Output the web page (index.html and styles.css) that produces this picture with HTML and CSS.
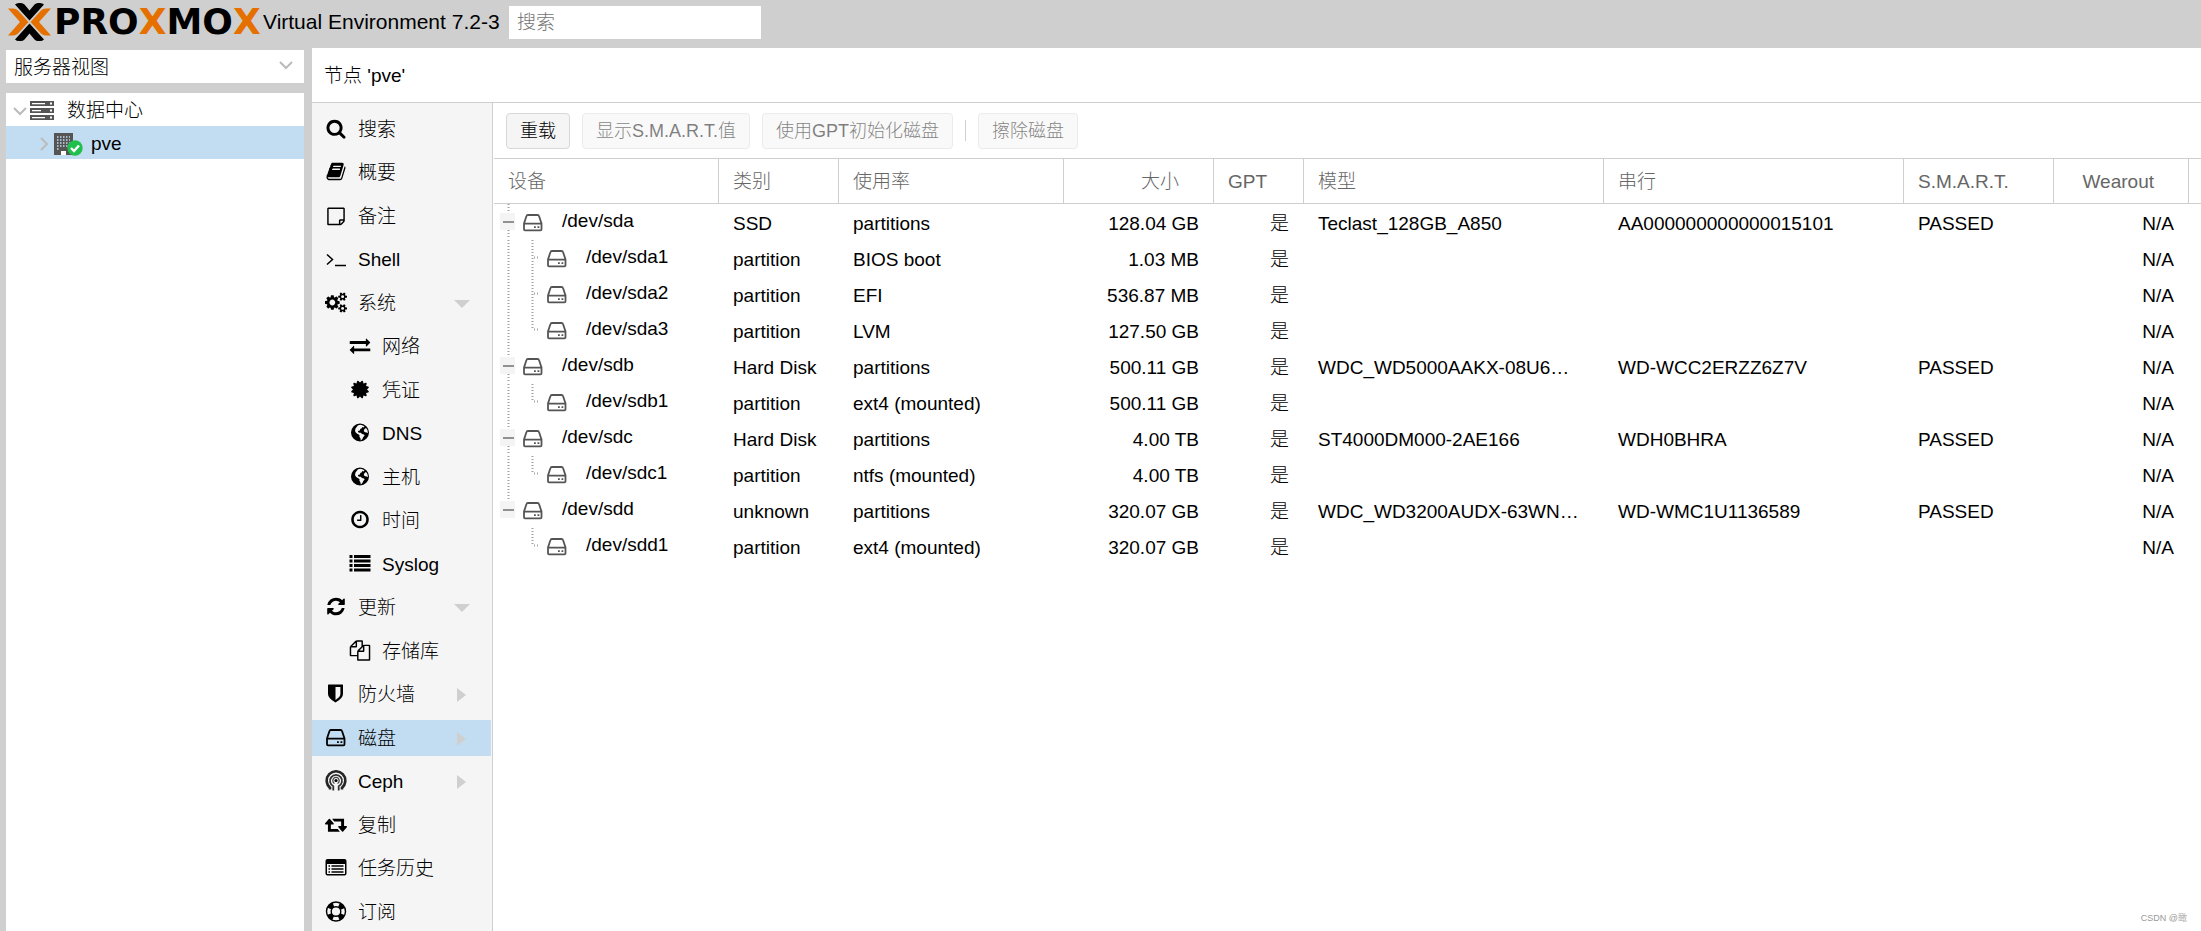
FILE: index.html
```
<!DOCTYPE html>
<html lang="zh-CN">
<head>
<meta charset="utf-8">
<title>pve - Proxmox Virtual Environment</title>
<link rel="stylesheet" href="styles.css">
</head>
<body>
<svg class="sprite" aria-hidden="true">
  <symbol id="i-search" viewBox="0 0 1920 1792"><path d="M1280 832q0-185-131.500-316.500t-316.500-131.500-316.500 131.500-131.500 316.500 131.500 316.500 316.500 131.500 316.500-131.500 131.500-316.500zm512 832q0 52-38 90t-90 38q-54 0-90-38l-343-342q-179 124-399 124-143 0-273.500-55.500t-225-150-150-225-55.500-273.500 55.500-273.500 150-225 225-150 273.500-55.500 273.500 55.500 225 150 150 225 55.500 273.500q0 220-124 399l343 343q37 37 37 90z"/></symbol>
  <symbol id="i-book" viewBox="-64 0 1920 1792"><path d="M1703 478q40 57 18 129l-275 906q-19 64-76.500 107.500t-122.500 43.500h-923q-77 0-148.500-53.500t-99.500-131.500q-24-67-2-127 0-4 3-27t4-37q1-8-3-21.500t-3-19.500q2-11 8-21t16.500-23.500 16.500-23.500q23-38 45-91.500t30-91.500q3-10 .5-30t-.5-28q3-11 17-28t17-23q21-36 42-92t25-90q1-9-2.500-32t.5-28q4-13 22-30.500t22-22.500q19-26 42.500-84.500t27.500-96.500q1-8-3-25.500t-2-26.500q2-8 9-18t18-23 17-21q8-12 16.500-30.500t15-35 16-36 19.500-32 26.500-23.500 36-11.500 47.500 5.500l-1 3q38-9 51-9h761q74 0 114 56t18 130l-274 906q-36 119-71.500 153.500t-128.500 34.500h-869q-27 0-38 15-11 16-1 43 24 70 144 70h923q29 0 56-15.500t35-41.500l300-987q7-22 5-57 38 15 59 43zm-1064 2q-4 13 2 22.500t20 9.500h608q13 0 25.500-9.500t16.500-22.500l21-64q4-13-2-22.500t-20-9.500h-608q-13 0-25.500 9.500t-16.500 22.500zm-83 256q-4 13 2 22.500t20 9.500h608q13 0 25.500-9.500t16.500-22.500l21-64q4-13-2-22.500t-20-9.500h-608q-13 0-25.500 9.500t-16.500 22.500z"/></symbol>
  <symbol id="i-note" viewBox="-192 -80 1920 1792"><path d="M1400 1280h-248v248q29-10 41-22l185-185q12-12 22-41zm-280-128h288v-896h-1280v1280h896v-288q0-40 28-68t68-28zm416-928v1024q0 40-20 88t-48 76l-184 184q-28 28-76 48t-88 20h-1024q-40 0-68-28t-28-68v-1344q0-40 28-68t68-28h1344q40 0 68 28t28 68z"/></symbol>
  <symbol id="i-shell" viewBox="0 0 22 21"><path d="M2 6.500l5.500 5-5.500 5M10 17.500h11" fill="none" stroke="currentColor" stroke-width="1.500"/></symbol>
  <symbol id="i-cogs" viewBox="0 0 1920 1792"><path d="M896 896q0-106-75-181t-181-75-181 75-75 181 75 181 181 75 181-75 75-181zm768 512q0-52-38-90t-90-38-90 38-38 90q0 53 37.500 90.500t90.500 37.500 90.500-37.500 37.500-90.500zm0-1024q0-52-38-90t-90-38-90 38-38 90q0 53 37.500 90.500t90.500 37.500 90.500-37.500 37.500-90.500zm-384 421v185q0 10-7 19.500t-16 10.500l-155 24q-11 35-32 76 34 48 90 115 7 11 7 20 0 12-7 19-23 30-82.500 89.500t-78.500 59.500q-11 0-21-7l-115-90q-37 19-77 31-11 108-23 155-7 24-30 24h-186q-11 0-20-7.500t-10-17.500l-23-153q-34-10-75-31l-118 89q-7 7-20 7-11 0-21-8-144-133-144-160 0-9 7-19 10-14 41-53t47-61q-23-44-35-82l-152-24q-10-1-17-9.500t-7-19.500v-185q0-10 7-19.500t16-10.500l155-24q11-35 32-76-34-48-90-115-7-11-7-20 0-12 7-20 22-30 82-89t79-59q11 0 21 7l115 90q34-18 77-32 11-108 23-154 7-24 30-24h186q11 0 20 7.500t10 17.500l23 153q34 10 75 31l118-89q8-7 20-7 11 0 21 8 144 133 144 160 0 9-7 19-11 15-41 53.500t-47 61.500q23 44 35 82l152 23q10 2 17 10.500t7 19.500zm640 533v140q0 16-149 31-12 27-30 52 51 113 51 138 0 4-4 7-122 71-124 71-8 0-46-47t-52-68q-20 2-30 2t-30-2q-14 21-52 68t-46 47q-2 0-124-71-4-3-4-7 0-25 51-138-18-25-30-52-149-15-149-31v-140q0-16 149-31 13-29 30-52-51-113-51-138 0-4 4-7 4-2 35-20t59-34 30-16q8 0 46 46.500t52 67.500q20-2 30-2t30 2q51-71 92-112l6-2q4 0 124 70 4 3 4 7 0 25-51 138 17 23 30 52 149 15 149 31zm0-1024v140q0 16-149 31-12 27-30 52 51 113 51 138 0 4-4 7-122 71-124 71-8 0-46-47t-52-68q-20 2-30 2t-30-2q-14 21-52 68t-46 47q-2 0-124-71-4-3-4-7 0-25 51-138-18-25-30-52-149-15-149-31v-140q0-16 149-31 13-29 30-52-51-113-51-138 0-4 4-7 4-2 35-20t59-34 30-16q8 0 46 46.500t52 67.500q20-2 30-2t30 2q51-71 92-112l6-2q4 0 124 70 4 3 4 7 0 25-51 138 17 23 30 52 149 15 149 31z"/></symbol>
  <symbol id="i-exchange" viewBox="-64 0 1920 1792"><path d="M1792 1184v192q0 13-9.500 22.500t-22.500 9.500h-1376v192q0 13-9.500 22.500t-22.500 9.500q-12 0-24-10l-319-320q-9-9-9-22 0-14 9-23l320-320q9-9 23-9 13 0 22.500 9.500t9.500 22.500v192h1376q13 0 22.500 9.500t9.500 22.500zm0-544q0 14-9 23l-320 320q-9 9-23 9-13 0-22.500-9.500t-9.500-22.500v-192h-1376q-13 0-22.500-9.500t-9.500-22.500v-192q0-13 9.500-22.500t22.500-9.500h1376v-192q0-14 9-23t23-9q12 0 24 10l319 319q9 9 9 23z"/></symbol>
  <symbol id="i-cert" viewBox="-64 0 1920 1792"><path d="M1504 896l138 135q30 28 20 70-12 41-52 51l-188 48 53 186q12 41-19 70-29 31-70 19l-186-53-48 188q-10 40-51 52-12 2-19 2-31 0-51-22l-135-138-135 138q-28 30-70 20-41-11-51-52l-48-188-186 53q-41 12-70-19-31-29-19-70l53-186-188-48q-40-10-52-51-10-42 20-70l138-135-138-135q-30-28-20-70 12-41 52-51l188-48-53-186q-12-41 19-70 29-31 70-19l186 53 48-188q10-41 51-51 41-12 70 19l135 139 135-139q29-30 70-19 41 10 51 51l48 188 186-53q41-12 70 19 31 29 19 70l-53 186 188 48q40 10 52 51 10 42-20 70z"/></symbol>
  <symbol id="i-globe" viewBox="0 0 22 21"><path fill-rule="evenodd" d="M11 1.500a9 9 0 1 0 0 18 9 9 0 1 0 0-18zM9 3.300l2.500-.5 2.500.6 1.500 1.200-1 .8-1.200-.4-.8 1.400-1.300.6-.2 1.500-1.700.3-.4 1.200 1.300.8 1.600 0 1.200 1.200 2 .4.600 1.200-1.500 1.600-.7 1.800-1.600 1.500-.4-2.300-1-1.400.1-1.700-1.800-1-1.700-1.400-1-1.700.5-2.500zM15.500 7l1.500-1 1.400 2 .6 3-1.400-.6-1.600-.2-1.300-1.200z"/></symbol>
  <symbol id="i-clock" viewBox="-64 0 1920 1792"><path d="M1024 544v448q0 14-9 23t-23 9h-320q-14 0-23-9t-9-23v-64q0-14 9-23t23-9h224v-352q0-14 9-23t23-9h64q14 0 23 9t9 23zm416 352q0-148-73-273t-198-198-273-73-273 73-198 198-73 273 73 273 198 198 273 73 273-73 198-198 73-273zm224 0q0 209-103 385.500t-279.500 279.500-385.500 103-385.500-103-279.500-279.500-103-385.500 103-385.500 279.500-279.500 385.500-103 385.500 103 279.500 279.500 103 385.500z"/></symbol>
  <symbol id="i-list" viewBox="0 0 22 21"><path d="M.5 2h3v3h-3zM5 2h16.500v3H5zM.5 6.500h3v3h-3zM5 6.500h16.500v3H5zM.5 11h3v3h-3zM5 11h16.500v3H5zM.5 15.500h3v3h-3zM5 15.500h16.500v3H5z"/></symbol>
  <symbol id="i-refresh" viewBox="-64 0 1920 1792"><path d="M1639 1056q0 5-1 7-64 268-268 434.500t-478 166.500q-146 0-282.500-55t-243.500-157l-129 129q-19 19-45 19t-45-19-19-45v-448q0-26 19-45t45-19h448q26 0 45 19t19 45-19 45l-137 137q71 66 161 102t187 36q134 0 250-65t186-179q11-17 53-117 8-23 30-23h192q13 0 22.500 9.500t9.500 22.500zm25-800v448q0 26-19 45t-45 19h-448q-26 0-45-19t-19-45 19-45l138-138q-148-137-349-137-134 0-250 65t-186 179q-11 17-53 117-8 23-30 23h-199q-13 0-22.500-9.500t-9.500-22.500v-7q65-268 270-434.500t480-166.500q146 0 284 55.500t245 156.500l130-129q19-19 45-19t45 19 19 45z"/></symbol>
  <symbol id="i-files" viewBox="-64 0 1920 1792"><path d="M1696 384q40 0 68 28t28 68v1216q0 40-28 68t-68 28h-960q-40 0-68-28t-28-68v-288h-544q-40 0-68-28t-28-68v-672q0-40 20-88t48-76l408-408q28-28 76-48t88-20h416q40 0 68 28t28 68v328q68-40 128-40h416zm-544 213l-299 299h299v-299zm-640-384l-299 299h299v-299zm196 647l316-316v-416h-384v416q0 40-28 68t-68 28h-416v640h512v-256q0-40 20-88t48-76zm956 804v-1152h-384v416q0 40-28 68t-68 28h-416v640h896z"/></symbol>
  <symbol id="i-shield" viewBox="0 0 22 21"><path fill-rule="evenodd" d="M3.500 1.500h14q.5 0 .5.600v9q0 4.500-7.500 8.400Q3 15.600 3 11.100v-9q0-.6.500-.6zM10.500 4v12.900q4.900-2.900 4.900-5.800V4z"/></symbol>
  <symbol id="i-hdd" viewBox="0 0 22 21"><path d="M2 11.500v5.800q0 1 1 1h15.500q1 0 1-1V11.500L17 4q-.3-1-1.300-1H5.800q-1 0-1.300 1zM2 11.700h17.500" fill="none" stroke="currentColor" stroke-width="1.800"/><path d="M12 14.200h1.800V16H12zM15.500 14.200h1.800V16h-1.800z"/></symbol>
  <symbol id="i-ceph" viewBox="0 0 22 21"><g fill="none" stroke="currentColor"><path d="M5 19.500v-1.800A9.300 9.300 0 1 1 17 17.700v1.800" stroke-width="2.600" opacity=".85"/><path d="M8.300 20.500v-4.300A6 6 0 1 1 13.700 16.200V20.500" stroke-width="1.800" opacity=".8"/><path d="M9.500 13.500a3.200 3.200 0 1 1 3 0" stroke-width="1.300" opacity=".7"/></g><circle cx="11" cy="10.500" r="1.600"/></symbol>
  <symbol id="i-retweet" viewBox="0 0 1920 1792"><path d="M1280 1504q0 13-9.500 22.500t-22.500 9.500h-960q-8 0-13.500-2t-9-7-5.500-8-3-11.500-1-11.500v-600h-192q-26 0-45-19t-19-45q0-24 15-41l320-384q19-22 49-22t49 22l320 384q15 17 15 41 0 26-19 45t-45 19h-192v384h576q16 0 25 11l160 192q7 10 7 21zm640-416q0 24-15 41l-320 384q-20 23-49 23t-49-23l-320-384q-15-17-15-41 0-26 19-45t45-19h192v-384h-576q-16 0-25-12l-160-192q-7-9-7-20 0-13 9.500-22.500t22.500-9.500h960q8 0 13.500 2t9 7 5.500 8 3 11.500 1 11.500v600h192q26 0 45 19t19 45z"/></symbol>
  <symbol id="i-listalt" viewBox="0 0 22 21"><path fill-rule="evenodd" d="M2.500 2h17q2 0 2 2v12.500q0 2-2 2h-17q-2 0-2-2V4q0-2 2-2zM2 7v9.500q0 .5.500.5h17q.5 0 .5-.5V7zM3.500 8.200H5v1.500H3.500zM6.500 8.200h12v1.500h-12zM3.500 11.200H5v1.500H3.500zM6.500 11.200h12v1.500h-12zM3.500 14.200H5v1.500H3.500zM6.500 14.200h12v1.500h-12z"/></symbol>
  <symbol id="i-support" viewBox="0 0 22 21"><g fill="none" stroke="currentColor"><circle cx="11" cy="10.500" r="9.500" stroke-width="1.400"/><circle cx="11" cy="10.500" r="4.800" stroke-width="1.400"/><circle cx="11" cy="10.500" r="7.200" stroke-width="5" stroke-dasharray="5.600 5.710" stroke-dashoffset="-2.850"/></g></symbol>
  <symbol id="i-server" viewBox="0 0 24 20"><path fill-rule="evenodd" d="M0 0h24v5H0zM2 2v1.200h13V2zM20 1.500v2h2v-2zM0 7h24v5H0zM2 9v1.200h9V9zM20 8.500v2h2v-2zM0 14h24v5H0zM2 16v1.200h13V16zM20 15.500v2h2v-2z"/></symbol>
  <symbol id="i-node" viewBox="0 0 30 24"><path fill="#555" d="M0 1h19v22H0z"/><path d="M3 5h13M3 8h13M3 11h13M3 14h13M3 17h3" stroke="#c2ddf2" stroke-width="1.500" stroke-dasharray="1.500 1.500" fill="none"/><path d="M7 19h5v4H7z" fill="#fff"/><circle cx="21" cy="16" r="7.700" fill="#21bf4b"/><path d="M17 16l3 3 5-5.500" fill="none" stroke="#fff" stroke-width="2.400"/></symbol>
  <symbol id="g-open" viewBox="0 0 24 36"><path class="dots" d="M12.500 0v10M12.500 26v8"/><path d="M4 9h15v17H4z" fill="#f4f4f4"/><path d="M7 17h11v2H7z" fill="#919191"/></symbol>
  <symbol id="g-open-last" viewBox="0 0 24 36"><path class="dots" d="M12.500 0v10"/><path d="M4 9h15v17H4z" fill="#f4f4f4"/><path d="M7 17h11v2H7z" fill="#919191"/></symbol>
  <symbol id="g-line" viewBox="0 0 24 36"><path class="dots" d="M12.500 0v34"/></symbol>
  <symbol id="g-tee" viewBox="0 0 24 36"><path class="dots" d="M12.500 0v34M14 17.500h6"/></symbol>
  <symbol id="g-end" viewBox="0 0 24 36"><path class="dots" d="M12.500 0v18M14 17.500h6"/></symbol>
</svg>

<header class="topbar">
  <div class="logo">
    <svg class="logo-mark" viewBox="0 0 43 38" aria-hidden="true">
      <path d="M7 1.500Q8.500 0 11 0h2q2 0 3.500 1.500l5 6 5-6Q28 0 30 0h2q2.500 0 4 1.500L21.500 17.500zM7 36.500Q8.500 38 11 38h2q2 0 3.500-1.500l5-6 5 6Q28 38 30 38h2q2.500 0 4-1.500L21.500 20.500z" fill="#000"/>
      <path d="M0 5.500h5q3 0 5 2L20.500 19 10 30.500q-2 2-5 2H0L12 19zM43 5.500h-5q-3 0-5 2L22.500 19 33 30.500q2 2 5 2h5L31 19z" fill="#e57000"/>
    </svg>
    <span class="logo-word">PRO<b>X</b>MO<b>X</b></span>
  </div>
  <span class="version">Virtual Environment 7.2-3</span>
  <input class="search" type="text" placeholder="搜索" aria-label="搜索">
</header>

<main class="workspace">
  <aside class="resources">
    <div class="view-picker">
      <select aria-label="视图"><option>服务器视图</option></select>
      <svg viewBox="0 0 14 9" aria-hidden="true"><path d="M1 1l6 6 6-6"/></svg>
    </div>
    <ul class="tree">
      <li class="tree-row"><svg class="twist" viewBox="0 0 14 14"><path d="M1 4l6 6 6-6"/></svg><svg class="server"><use href="#i-server"/></svg><span>数据中心</span></li>
      <li class="tree-row child selected"><svg class="twist" viewBox="0 0 14 14"><path d="M4 1l6 6-6 6"/></svg><svg class="node"><use href="#i-node"/></svg><span>pve</span></li>
    </ul>
  </aside>

  <section class="panel">
    <h1 class="panel-title">节点 'pve'</h1>
    <div class="panel-body">
      <nav class="menu">
        <a href="#"><svg><use href="#i-search"/></svg>搜索</a>
        <a href="#"><svg><use href="#i-book"/></svg>概要</a>
        <a href="#"><svg><use href="#i-note"/></svg>备注</a>
        <a href="#"><svg><use href="#i-shell"/></svg>Shell</a>
        <a href="#" class="open"><svg><use href="#i-cogs"/></svg>系统</a>
        <a href="#" class="sub"><svg><use href="#i-exchange"/></svg>网络</a>
        <a href="#" class="sub"><svg><use href="#i-cert"/></svg>凭证</a>
        <a href="#" class="sub"><svg><use href="#i-globe"/></svg>DNS</a>
        <a href="#" class="sub"><svg><use href="#i-globe"/></svg>主机</a>
        <a href="#" class="sub"><svg><use href="#i-clock"/></svg>时间</a>
        <a href="#" class="sub"><svg><use href="#i-list"/></svg>Syslog</a>
        <a href="#" class="open"><svg><use href="#i-refresh"/></svg>更新</a>
        <a href="#" class="sub"><svg><use href="#i-files"/></svg>存储库</a>
        <a href="#" class="closed"><svg><use href="#i-shield"/></svg>防火墙</a>
        <a href="#" class="closed selected"><svg><use href="#i-hdd"/></svg>磁盘</a>
        <a href="#" class="closed"><svg><use href="#i-ceph"/></svg>Ceph</a>
        <a href="#"><svg><use href="#i-retweet"/></svg>复制</a>
        <a href="#"><svg><use href="#i-listalt"/></svg>任务历史</a>
        <a href="#"><svg><use href="#i-support"/></svg>订阅</a>
      </nav>

      <div class="content">
        <div class="toolbar">
          <button type="button">重载</button>
          <button type="button" disabled>显示S.M.A.R.T.值</button>
          <button type="button" disabled>使用GPT初始化磁盘</button>
          <span class="divider"></span>
          <button type="button" disabled>擦除磁盘</button>
        </div>
        <table class="disks">
          <colgroup><col class="c-dev"><col class="c-type"><col class="c-use"><col class="c-size"><col class="c-gpt"><col class="c-model"><col class="c-serial"><col class="c-smart"><col class="c-wear"><col></colgroup>
          <thead>
            <tr><th>设备</th><th>类别</th><th>使用率</th><th class="num">大小</th><th>GPT</th><th>模型</th><th>串行</th><th>S.M.A.R.T.</th><th class="num">Wearout</th><th class="rest"></th></tr>
          </thead>
          <tbody>
            <tr><td class="dev"><div><svg class="guide"><use href="#g-open"/></svg><svg class="disk"><use href="#i-hdd"/></svg>/dev/sda</div></td><td>SSD</td><td>partitions</td><td class="num">128.04 GB</td><td class="num">是</td><td>Teclast_128GB_A850</td><td>AA000000000000015101</td><td>PASSED</td><td class="num">N/A</td><td></td></tr>
            <tr><td class="dev"><div><svg class="guide"><use href="#g-line"/></svg><svg class="guide"><use href="#g-tee"/></svg><svg class="disk"><use href="#i-hdd"/></svg>/dev/sda1</div></td><td>partition</td><td>BIOS boot</td><td class="num">1.03 MB</td><td class="num">是</td><td></td><td></td><td></td><td class="num">N/A</td><td></td></tr>
            <tr><td class="dev"><div><svg class="guide"><use href="#g-line"/></svg><svg class="guide"><use href="#g-tee"/></svg><svg class="disk"><use href="#i-hdd"/></svg>/dev/sda2</div></td><td>partition</td><td>EFI</td><td class="num">536.87 MB</td><td class="num">是</td><td></td><td></td><td></td><td class="num">N/A</td><td></td></tr>
            <tr><td class="dev"><div><svg class="guide"><use href="#g-line"/></svg><svg class="guide"><use href="#g-end"/></svg><svg class="disk"><use href="#i-hdd"/></svg>/dev/sda3</div></td><td>partition</td><td>LVM</td><td class="num">127.50 GB</td><td class="num">是</td><td></td><td></td><td></td><td class="num">N/A</td><td></td></tr>
            <tr><td class="dev"><div><svg class="guide"><use href="#g-open"/></svg><svg class="disk"><use href="#i-hdd"/></svg>/dev/sdb</div></td><td>Hard Disk</td><td>partitions</td><td class="num">500.11 GB</td><td class="num">是</td><td>WDC_WD5000AAKX-08U6…</td><td>WD-WCC2ERZZ6Z7V</td><td>PASSED</td><td class="num">N/A</td><td></td></tr>
            <tr><td class="dev"><div><svg class="guide"><use href="#g-line"/></svg><svg class="guide"><use href="#g-end"/></svg><svg class="disk"><use href="#i-hdd"/></svg>/dev/sdb1</div></td><td>partition</td><td>ext4 (mounted)</td><td class="num">500.11 GB</td><td class="num">是</td><td></td><td></td><td></td><td class="num">N/A</td><td></td></tr>
            <tr><td class="dev"><div><svg class="guide"><use href="#g-open"/></svg><svg class="disk"><use href="#i-hdd"/></svg>/dev/sdc</div></td><td>Hard Disk</td><td>partitions</td><td class="num">4.00 TB</td><td class="num">是</td><td>ST4000DM000-2AE166</td><td>WDH0BHRA</td><td>PASSED</td><td class="num">N/A</td><td></td></tr>
            <tr><td class="dev"><div><svg class="guide"><use href="#g-line"/></svg><svg class="guide"><use href="#g-end"/></svg><svg class="disk"><use href="#i-hdd"/></svg>/dev/sdc1</div></td><td>partition</td><td>ntfs (mounted)</td><td class="num">4.00 TB</td><td class="num">是</td><td></td><td></td><td></td><td class="num">N/A</td><td></td></tr>
            <tr><td class="dev"><div><svg class="guide"><use href="#g-open-last"/></svg><svg class="disk"><use href="#i-hdd"/></svg>/dev/sdd</div></td><td>unknown</td><td>partitions</td><td class="num">320.07 GB</td><td class="num">是</td><td>WDC_WD3200AUDX-63WN…</td><td>WD-WMC1U1136589</td><td>PASSED</td><td class="num">N/A</td><td></td></tr>
            <tr><td class="dev"><div><svg class="guide"></svg><svg class="guide"><use href="#g-end"/></svg><svg class="disk"><use href="#i-hdd"/></svg>/dev/sdd1</div></td><td>partition</td><td>ext4 (mounted)</td><td class="num">320.07 GB</td><td class="num">是</td><td></td><td></td><td></td><td class="num">N/A</td><td></td></tr>
          </tbody>
        </table>
      </div>
    </div>
  </section>
</main>
<div class="watermark">CSDN @瞰</div>
</body>
</html>
```
FILE: styles.css
```
* { box-sizing: border-box; }

body {
  margin: 0;
  height: 100vh;
  display: flex;
  flex-direction: column;
  overflow: hidden;
  background: #cfcfcf;
  color: #000;
  font: 300 19px/24px "Liberation Sans", "Noto Sans CJK SC", sans-serif;
}

button, input, select { font: inherit; color: inherit; }
.sprite { position: absolute; width: 0; height: 0; }
svg { flex: none; fill: currentColor; }
.dots { fill: none; stroke: #a0a0a0; stroke-width: 2; stroke-dasharray: 1 2; }

/* top bar */
.topbar { display: flex; align-items: center; height: 48px; padding: 0 8px 4px; }
.logo { display: flex; align-items: center; gap: 3px; width: 255px; }
.logo-mark { width: 43px; height: 38px; }
.logo-word { font: bold 36px/40px "DejaVu Sans", sans-serif; }
.logo-word b { color: #e57000; }
.version { width: 246px; font-size: 21px; white-space: nowrap; }
.search { width: 252px; height: 33px; padding: 2px 8px 0; border: 0; background: #fff; outline: 0; }
.search::placeholder { color: #757575; opacity: 1; }

/* resource tree */
.workspace { flex: 1; display: flex; min-height: 0; }
.resources { display: flex; flex-direction: column; gap: 10px; width: 312px; padding: 2px 8px 0 6px; }
.view-picker { position: relative; height: 33px; background: #fff; }
.view-picker select { width: 100%; height: 100%; padding: 2px 8px 0; border: 0; background: transparent; appearance: none; outline: 0; }
.view-picker svg { position: absolute; right: 11px; top: 11px; width: 14px; height: 9px; fill: none; stroke: #bbb; stroke-width: 2; }
.tree { flex: 1; margin: 0; padding: 0; list-style: none; background: #fff; }
.tree-row { display: flex; align-items: center; height: 33px; padding: 2px 0 0 7px; }
.tree-row.child { padding-left: 31px; }
.twist { width: 14px; height: 14px; margin-right: 3px; fill: none; stroke: #bbb; stroke-width: 2; }
.server { width: 24px; height: 20px; margin-right: 13px; color: #555; }
.node { width: 30px; height: 24px; margin-right: 7px; }
.selected { background: #c2ddf2; }

/* node panel */
.panel { flex: 1; display: flex; flex-direction: column; min-width: 0; background: #fff; }
.panel-title { margin: 0; height: 55px; padding: 0 12px; border-bottom: 1px solid #cfcfcf; font-size: 19px; font-weight: 300; line-height: 56px; }
.panel-body { flex: 1; display: flex; min-height: 0; }

.menu { width: 181px; padding: 8px 1px 0 0; background: #f5f5f5; border-right: 1px solid #cfcfcf; overflow: hidden; }
.menu a { display: flex; align-items: center; gap: 11px; height: 36px; margin-bottom: 7px; padding: 2px 21px 0 13px; color: #000; text-decoration: none; }
.menu a:nth-child(even) { margin-bottom: 8px; }
.menu a.sub { padding-left: 37px; }
.menu svg { width: 22px; height: 21px; margin-bottom: 4px; }
.menu .open::after { content: ""; margin-left: auto; border: 8px solid transparent; border-top-color: #cfcfcf; border-bottom: 0; }
.menu .closed::after { content: ""; margin: 0 4px 0 auto; border: 7px solid transparent; border-left: 9px solid #cfcfcf; border-right: 0; }

.content { flex: 1; min-width: 0; padding-left: 1px; }
.toolbar { display: flex; align-items: center; gap: 12px; height: 56px; padding: 0 12px; border-bottom: 1px solid #cfcfcf; }
.toolbar button { height: 36px; padding: 0 13px; border: 1px solid #d8d8d8; border-radius: 4px; background: #f5f5f5; font-size: 18px; line-height: 24px; white-space: nowrap; }
.toolbar button:disabled { opacity: .5; }
.divider { width: 1px; height: 21px; background: #cfcfcf; }

/* disk table */
.disks { width: 100%; table-layout: fixed; border-collapse: separate; border-spacing: 0; }
.c-dev, .c-use { width: 225px; }
.c-type { width: 120px; }
.c-size, .c-smart { width: 150px; }
.c-gpt { width: 90px; }
.c-model, .c-serial { width: 300px; }
.c-wear { width: 135px; }
th { height: 45px; padding: 1px 15px 0 14px; border: solid #cfcfcf; border-width: 0 1px 1px 0; color: #666; font-weight: 300; text-align: left; }
th.rest { padding: 0; border-right: 0; }
td { height: 36px; padding: 3px 15px 0 14px; overflow: hidden; white-space: nowrap; line-height: 24px; }
.num { text-align: right; }
th.num { padding-right: 34px; }
td.dev { padding: 0 0 0 2px; }
td.dev div { display: flex; align-items: center; height: 36px; padding-bottom: 2px; }
.guide { width: 24px; height: 36px; margin-bottom: -2px; }
.disk { width: 22px; height: 21px; margin: 2px 18px 0 2px; color: #555; }

.watermark { position: absolute; right: 14px; bottom: 6px; color: #999; font-size: 9px; line-height: 14px; }
```
